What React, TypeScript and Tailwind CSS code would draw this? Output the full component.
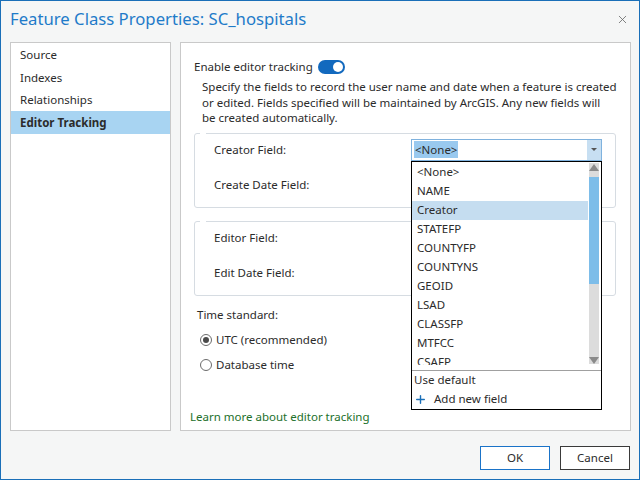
import { Plus, X } from "lucide-react";

const fields = ["<None>", "NAME", "Creator", "STATEFP", "COUNTYFP", "COUNTYNS", "GEOID", "LSAD", "CLASSFP", "MTFCC", "CSAFP"];
const navItems = ["Source", "Indexes", "Relationships", "Editor Tracking"];

function Radio({ checked, label }: { checked?: boolean; label: string }) {
  return (
    <div className="flex h-[25px] items-center gap-[4px] pl-[6px]">
      <span className="flex h-[12px] w-[12px] items-center justify-center rounded-full border border-[#6b6b6b] bg-white">
        {checked && <span className="h-[6px] w-[6px] rounded-full bg-[#4a4a4a]" />}
      </span>
      <span>{label}</span>
    </div>
  );
}

function FieldDropdown() {
  return (
    <div className="absolute left-[-1px] top-[21px] z-10 w-[191px] border border-black bg-white">
      <div className="flex">
        <div className="flex-1 pt-[1px]">
          {fields.map((f, i) =>
            i === fields.length - 1 ? (
              <div key={f} className="h-[12px] overflow-hidden pl-[5px] pt-[1.5px] leading-[16px]">
                {f}
              </div>
            ) : (
              <div key={f} className={`flex h-[19px] items-center pl-[5px] ${i === 2 ? "mr-[1px] bg-[#c5ddf0]" : ""}`}>
                {f}
              </div>
            )
          )}
        </div>
        <div className="my-[1px] mr-[2px] flex w-[10px] flex-col items-center bg-[#dcdcdc]">
          <div className="mt-[1px] h-0 w-0 border-x-[5px] border-b-[7px] border-x-transparent border-b-[#8a8a8a]" />
          <div className="mt-[6px] h-[107px] w-[10px] bg-[#7dbde9]" />
          <div className="flex-1" />
          <div className="h-0 w-0 border-x-[5px] border-t-[7px] border-x-transparent border-t-[#8a8a8a]" />
        </div>
      </div>
      <div className="mt-[5px] border-t border-[#a0a0a0]" />
      <div className="flex h-[19px] items-center pl-[2px]">Use default</div>
      <div className="flex h-[19px] items-center gap-[7px] pl-[2px]">
        <Plus size={13} strokeWidth={2.6} className="text-[#1a6fb8]" />
        <span>Add new field</span>
      </div>
    </div>
  );
}

function GroupBox({ rows, combo }: { rows: string[]; combo?: boolean }) {
  return (
    <div className="relative mr-[14px] h-[75px] rounded-[3px] border border-[#d6dce2] pl-[19px] pt-[5px]">
      <div className="absolute left-[5px] top-[-1px] h-[1px] w-[6px] bg-white" />
      {rows.map((r, i) => (
        <div key={r} className={`flex h-[22px] items-center justify-between ${i === 0 ? "" : "mt-[13px]"}`}>
          <span>{r}</span>
          {combo && i === 0 && (
            <div className="relative mr-[13px] flex h-[22px] w-[191px] items-center border border-[#7fb2de] bg-white">
              <span className="ml-[2px] bg-[#99c9ef] px-[1px]">&lt;None&gt;</span>
              <div className="ml-auto flex h-full w-[14px] items-center justify-center bg-[#c7dff2]">
                <div className="h-0 w-0 border-x-[3px] border-t-[3px] border-x-transparent border-t-[#555]" />
              </div>
              <FieldDropdown />
            </div>
          )}
        </div>
      ))}
    </div>
  );
}

export default function App() {
  return (
    <div
      className="flex h-[480px] w-[640px] flex-col border border-[#1a6fb8] bg-[#f5f6f6] text-[11.5px] text-[#2b2b2b]"
      style={{ fontFamily: '"Noto Sans", "Open Sans", sans-serif' }}
    >
      {/* Title bar */}
      <div className="flex h-[41px] items-start justify-between pl-[9px] pr-[10px] pt-[6px]">
        <span className="text-[16.7px] leading-[24px] text-[#1f7bc9]">Feature Class Properties: SC_hospitals</span>
        <X size={13} strokeWidth={1.5} className="mt-[6px] text-[#666]" />
      </div>

      {/* Body */}
      <div className="flex h-[389px] gap-[9px] pl-[9px] pr-[8px]">
        <div className="w-[161px] shrink-0 border border-[#c9c9c9] bg-white pt-[0.5px]">
          {navItems.map((n, i) => (
            <div
              key={n}
              className={`flex h-[22.5px] items-center pl-[9px] ${i === 3 ? "bg-[#a8d4f2] font-bold" : ""}`}
            >
              {n}
            </div>
          ))}
        </div>

        <div className="flex min-w-0 flex-1 flex-col border border-[#c9c9c9] bg-white pl-[13px] pt-[16px]">
          <div className="flex h-[16px] items-center gap-[5px]">
            <span>Enable editor tracking</span>
            <span className="flex h-[14px] w-[27px] items-center justify-end rounded-full bg-[#1269be] pr-[2px]">
              <span className="h-[10px] w-[10px] rounded-full bg-white" />
            </span>
          </div>
          <p className="ml-[8px] mt-[4px] whitespace-nowrap leading-[15.5px]">
            Specify the fields to record the user name and date when a feature is created
            <br />
            or edited. Fields specified will be maintained by ArcGIS. Any new fields will
            <br />
            be created automatically.
          </p>
          <div className="mt-[7px]">
            <GroupBox rows={["Creator Field:", "Create Date Field:"]} combo />
          </div>
          <div className="mt-[13px]">
            <GroupBox rows={["Editor Field:", "Edit Date Field:"]} />
          </div>
          <div className="ml-[3px] mt-[11px] flex h-[16px] items-center">Time standard:</div>
          <div className="mt-[5px]">
            <Radio checked label="UTC (recommended)" />
            <Radio label="Database time" />
          </div>
          <div className="flex-1" />
          <div className="-ml-[4px] mb-[5px] text-[#22702a]">Learn more about editor tracking</div>
        </div>
      </div>

      {/* Footer */}
      <div className="flex flex-1 items-start justify-end gap-[10px] pr-[9px] pt-[15px]">
        <button className="h-[24px] w-[70px] border border-[#1a73c8] bg-white text-[#2b2b2b]">OK</button>
        <button className="h-[24px] w-[70px] border border-[#3a3a3a] bg-white text-[#2b2b2b]">Cancel</button>
      </div>
    </div>
  );
}
